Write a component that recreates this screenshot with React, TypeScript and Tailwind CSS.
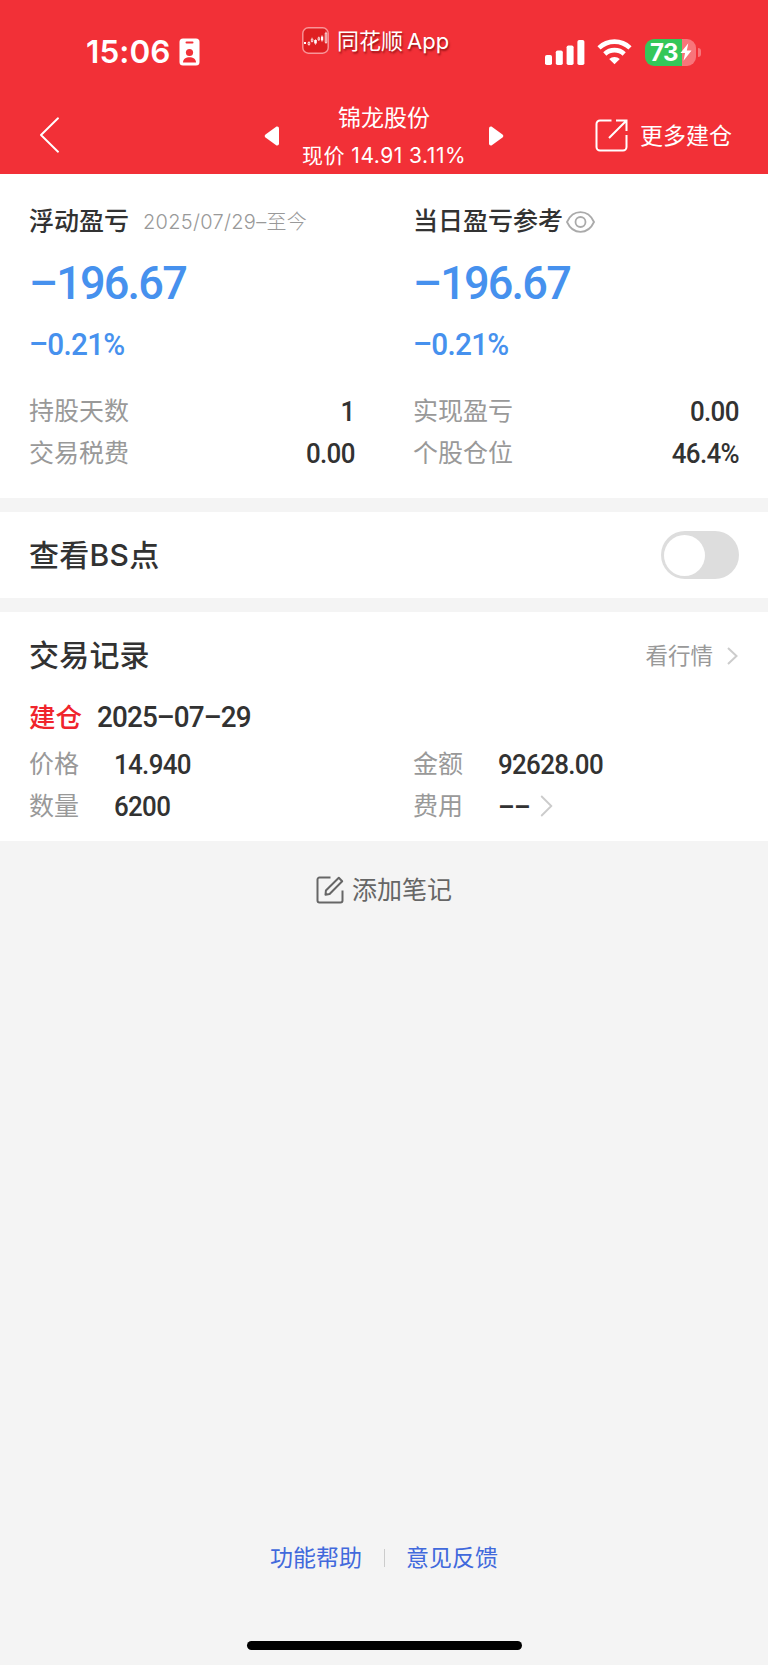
import type { ReactNode } from "react"

// condensed a little, the figures are set in a narrow DIN-like face
const NUM = "inline-block scale-x-[0.96] font-[Roboto,'Noto_Sans_CJK_SC',sans-serif] font-medium"

function StatusBar() {
  return (
    <div className="flex h-[104px] items-center">
      <span className="ml-[86px] w-[87px] text-[31.500px] leading-none font-semibold tracking-[0.100px] whitespace-nowrap">15:06</span>
      <svg className="ml-[6px]" width="21" height="28" viewBox="0 0 21 28">
        <rect x="0.5" y="0.5" width="20" height="27" rx="3.5" fill="#fff" />
        <rect x="6.5" y="3.4" width="8" height="2" rx="1" fill="#f23037" />
        <circle cx="10.5" cy="14.5" r="3.6" fill="#f23037" />
        <path d="M4 24.5c0-3.4 3-5.2 6.500-5.200s6.500 1.800 6.500 5.200z" fill="#f23037" />
      </svg>
      <div className="mb-[23px] ml-[102px] flex w-[150px] items-center">
        <svg width="27" height="27" viewBox="0 0 27 27" fill="none">
          <rect x="0.8" y="0.8" width="25.400" height="25.400" rx="5.500" fill="#df1f22" stroke="#f99598" strokeWidth="1.400" />
          <path d="M2 15h2v2H2zM12.200 13h2.600v3.600h-2.600zM19 9.500h2.200v4H19z" fill="#fff" />
          <path d="M6 15.500h1.800v2H6zM9.300 12h1.600v2.500H9.300zM16 10.700h1.600V13H16zM23.200 6h1.600v9.500h-1.600z" stroke="#fff" strokeWidth="0.700" />
          <path d="M7 14v5M10 10.500v5M13.500 12v6M16.800 9.500V14M20 8v7M24 4.500V17" stroke="#fff" strokeWidth="0.500" />
        </svg>
        <span className="ml-[8px] text-[22px] leading-none whitespace-nowrap [text-shadow:1px_2px_2px_rgba(90,0,0,0.6)]">
          同花顺<span className="ml-[4px]">App</span>
        </span>
      </div>
      <svg className="ml-[93px]" width="40" height="25" viewBox="0 0 40 25" fill="#fff">
        <rect x="0" y="15" width="7" height="10" rx="1.800" />
        <rect x="10.800" y="10.500" width="7" height="14.500" rx="1.800" />
        <rect x="21.600" y="5.500" width="7" height="19.500" rx="1.800" />
        <rect x="32.400" y="0" width="7" height="25" rx="1.800" />
      </svg>
      <svg className="ml-[12px]" width="35" height="26" viewBox="0 0 35 26" fill="none" stroke="#fff" strokeWidth="4.600">
        <path d="M2 8.800a22.500 22.500 0 0 1 31 0" />
        <path d="M7.800 15a14.200 14.200 0 0 1 19.400 0" />
        <path d="M17.500 25.300l-5.300-5.300a7.800 7.800 0 0 1 10.600 0z" fill="#fff" stroke="none" />
      </svg>
      <div className="ml-[13px] flex items-center">
        <div className="flex h-[27px] w-[51px] items-center rounded-[9px] bg-[linear-gradient(90deg,#34c759_73%,#f8757a_73%)] pl-[5px]">
          <span className="w-[29px] pt-[1px] text-[24px] leading-none font-bold tracking-[-0.500px]">73</span>
          <svg className="ml-[1px]" width="12" height="18" viewBox="0 0 13 19">
            <path d="M9 0L0.500 10.600h5L3.800 19 12.500 8H7.400z" fill="#fff" />
          </svg>
        </div>
        <div className="ml-[2px] h-[9px] w-[3px] rounded-r-full bg-[#f8757a]" />
      </div>
    </div>
  )
}

function NavBar() {
  return (
    <div className="flex h-[63px] items-center">
      <svg className="mb-[1px] ml-[39px]" width="21" height="36" viewBox="0 0 21 36" fill="none" stroke="#fff" strokeWidth="1.900" strokeLinecap="round" strokeLinejoin="round">
        <path d="M19 1.300L2 18l17 16.700" />
      </svg>
      <svg className="ml-[204px]" width="16" height="20" viewBox="0 0 16 20" fill="#fff">
        <path d="M12.500 0.500Q15 0 15 2.500v15q0 2.500-2.500 2L1.500 11.500q-1.600-1.500 0-3z" />
      </svg>
      <div className="ml-[5px] flex w-[198px] flex-col items-center pt-[2px] whitespace-nowrap">
        <span className="text-[23px] leading-[37px]">锦龙股份</span>
        <span className="text-[21px] leading-[37px] tracking-[0.500px]">现价 14.91 3.11%</span>
      </div>
      <svg className="ml-[5px]" width="16" height="20" viewBox="0 0 16 20" fill="#fff">
        <path d="M3.500 0.500Q1 0 1 2.500v15q0 2.500 2.500 2L14.500 11.500q1.600-1.500 0-3z" />
      </svg>
      <svg className="ml-[91px]" width="33" height="33" viewBox="0 0 33 33" fill="none" stroke="#fff" strokeWidth="2">
        <path d="M16.500 1.500H5a3.500 3.500 0 0 0-3.500 3.500v23A3.500 3.500 0 0 0 5 31.500h23a3.500 3.500 0 0 0 3.500-3.500V16" />
        <path d="M21 1.500h10.500V12M31.500 1.500L14 19" />
      </svg>
      <span className="ml-[12px] pt-[2px] text-[23px] leading-none whitespace-nowrap">更多建仓</span>
    </div>
  )
}

function Row({ label, value }: { label: string; value: string }) {
  return (
    <div className="flex h-[42px] items-center justify-between">
      <span className="text-[25px] text-[#999]">{label}</span>
      <span className={`${NUM} origin-right text-[27px] tracking-[-0.7px]`}>{value}</span>
    </div>
  )
}

interface ProfitProps {
  title: string
  extra: ReactNode
  rows: [string, string][]
}

function Profit({ title, extra, rows }: ProfitProps) {
  return (
    <div className="px-[29px]">
      <div className="flex h-[36px] items-center whitespace-nowrap">
        <span className="text-[25px] font-medium">{title}</span>
        {extra}
      </div>
      <div className="flex h-[86px] items-center text-[#4691ee]">
        <span className={`${NUM} origin-left text-[47px] tracking-[-1.900px]`}>–196.67</span>
      </div>
      <div className="mb-[27px] flex h-[38px] items-center text-[#4691ee]">
        <span className={`${NUM} origin-left text-[31px] tracking-[-0.800px]`}>–0.21%</span>
      </div>
      {rows.map(([label, value]) => (
        <Row key={label} label={label} value={value} />
      ))}
    </div>
  )
}

function Field({ label, children }: { label: string; children: ReactNode }) {
  return (
    <div className="flex h-[42px] items-center px-[29px]">
      <span className="w-[85px] text-[25px] text-[#999]">{label}</span>
      <span className={`${NUM} origin-left text-[27px] tracking-[-0.7px]`}>{children}</span>
    </div>
  )
}

export default function App() {
  return (
    <div className="flex h-[1665px] w-[768px] flex-col bg-[#f4f4f4] font-[Inter,'Noto_Sans_CJK_SC',sans-serif] text-[#323232]">
      <header className="h-[174px] bg-[#f23037] text-white">
        <StatusBar />
        <NavBar />
      </header>

      <section className="grid h-[324px] grid-cols-2 bg-white pt-[30px]">
        <Profit
          title="浮动盈亏"
          extra={<span className="ml-[14px] text-[20px] font-light tracking-[0.300px] text-[#999]">2025/07/29–至今</span>}
          rows={[["持股天数", "1"], ["交易税费", "0.00"]]}
        />
        <Profit
          title="当日盈亏参考"
          extra={
            <svg className="mb-[1px] ml-[3px]" width="29" height="22" viewBox="0 0 29 22" fill="none" stroke="#aaa" strokeWidth="1.800">
              <path d="M1 11C4 4.500 9 1.200 14.500 1.200S25 4.500 28 11c-3 6.500-8 9.800-13.500 9.800S4 17.500 1 11z" />
              <circle cx="14.500" cy="11" r="5" />
            </svg>
          }
          rows={[["实现盈亏", "0.00"], ["个股仓位", "46.4%"]]}
        />
      </section>

      <section className="mt-[14px] flex h-[86px] items-center justify-between bg-white px-[29px]">
        <span className="text-[30px] font-medium tracking-[0.300px]">查看BS点</span>
        <div className="flex h-[48px] w-[78px] items-center rounded-full bg-[#ddd] pl-[3px]">
          <div className="size-[41px] rounded-full bg-white" />
        </div>
      </section>

      <section className="mt-[14px] h-[229px] bg-white pt-[19px]">
        <div className="flex h-[48px] items-center justify-between px-[29px]">
          <span className="text-[30px] font-medium tracking-[0.200px]">交易记录</span>
          <span className="flex items-center pt-[1px] text-[22.500px] text-[#999]">
            看行情
            <svg className="mr-[1px] ml-[14px]" width="11" height="18" viewBox="0 0 11 18" fill="none" stroke="#ccc" strokeWidth="2">
              <path d="M1 1l8.500 8L1 17" />
            </svg>
          </span>
        </div>
        <div className="mt-[16px] flex h-[46px] items-center px-[29px]">
          <span className="text-[26.500px] font-medium text-[#f0242c]">建仓</span>
          <span className={`${NUM} ml-[15px] origin-left text-[29px] tracking-[-0.900px]`}>2025–07–29</span>
        </div>
        <div className="mt-[3px] grid grid-cols-2">
          <Field label="价格">14.940</Field>
          <Field label="金额">92628.00</Field>
          <Field label="数量">6200</Field>
          <Field label="费用">
            <span className="flex items-center">
              ––
              <svg className="mb-[2px] ml-[11px]" width="13" height="22" viewBox="0 0 13 22" fill="none" stroke="#ccc" strokeWidth="2">
                <path d="M1 1l10.500 10L1 21" />
              </svg>
            </span>
          </Field>
        </div>
      </section>

      <div className="mt-[28px] flex h-[42px] items-center justify-center text-[25px] text-[#666]">
        <svg className="mr-[8px]" width="28" height="28" viewBox="0 0 28 28" fill="none" stroke="#666" strokeWidth="2" strokeLinejoin="round">
          <path d="M14.500 1.500H3.500a2 2 0 0 0-2 2v21a2 2 0 0 0 2 2h21a2 2 0 0 0 2-2V14.500" />
          <path d="M9.500 18.800l0.400-4.300L22.800 1.800l3.400 3.400L13.600 18z" />
        </svg>
        <span className="pt-[2px]">添加笔记</span>
      </div>

      <footer className="mt-auto flex flex-col items-center">
        <div className="flex h-[36px] items-center text-[23px] text-[#4169dc]">
          <span>功能帮助</span>
          <span className="mx-[21.500px] h-[18px] w-px bg-[#ccc]" />
          <span>意见反馈</span>
        </div>
        <div className="mt-[65px] mb-[15px] h-[9px] w-[275px] rounded-full bg-black" />
      </footer>
    </div>
  )
}
